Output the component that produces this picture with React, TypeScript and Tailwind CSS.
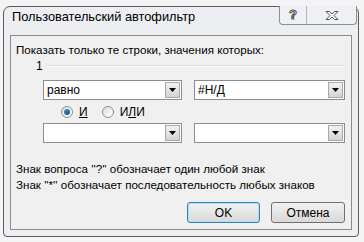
const FONT = "font-['Liberation_Sans','Noto_Sans',sans-serif]";

function Combo({ value, width }: { value: string; width: string }) {
  return (
    <div className={`${width} h-[20px] flex items-stretch border border-[#8a8d92] bg-white`}>
      <div className="flex-1 flex items-center pl-[3px] text-[12px] leading-[16px] text-black">{value}</div>
      <div className="w-[15px] m-[1px] ml-0 flex items-center justify-center border border-[#a9a9a9] bg-gradient-to-b from-[#f2f2f2] to-[#d4d4d4]">
        <svg width="7" height="4" viewBox="0 0 7 4">
          <path d="M0 0 H7 L3.5 4 Z" fill="#000" />
        </svg>
      </div>
    </div>
  );
}

function Radio({ checked, children }: { checked?: boolean; children: React.ReactNode }) {
  return (
    <div className="flex items-center gap-[6px]">
      <div className="w-[12px] h-[12px] rounded-full border border-[#8e8f8f] bg-gradient-to-br from-[#dcdcdc] to-[#ffffff] flex items-center justify-center">
        {checked && <div className="w-[6px] h-[6px] rounded-full bg-gradient-to-br from-[#3d9ad8] to-[#0d4d8a]" />}
      </div>
      <span className="text-[12px] leading-[16px] text-black">{children}</span>
    </div>
  );
}

export default function App() {
  return (
    <div className={`w-[364px] h-[242px] bg-[#f4f4f4] pt-[6px] pl-[3px] ${FONT}`}>
      <div className="relative w-[356px] h-[231px] rounded-t-[7px] rounded-b-[4px] border border-[#5b5b5b] bg-[#eceef1] flex flex-col">
        {/* caption buttons */}
        <div className="absolute top-[-1px] right-[1px] w-[78px] h-[19px] flex border border-t-0 border-[#8d8f93] rounded-b-[4px] bg-[#eef0f3]">
          <div className="w-[27px] flex items-center justify-center border-r border-[#b4b6ba]">
            <span className="text-[13px] font-bold text-[#f4f4f4] [-webkit-text-stroke:1px_#555]">?</span>
          </div>
          <div className="flex-1 flex items-center justify-center">
            <svg width="16" height="11" viewBox="0 0 16 11">
              <path d="M2 1.5 H5.5 L8 4 L10.5 1.5 H14 L10 5.5 L14 9.5 H10.5 L8 7 L5.5 9.5 H2 L6 5.5 Z" fill="#f4f4f4" stroke="#555" strokeWidth="1" />
            </svg>
          </div>
        </div>

        <div className="h-[28px] pl-[8px] pt-[2px] text-[12.8px] leading-[16px] text-black">Пользовательский автофильтр</div>

        <div className="mx-[6px] h-[195px] border border-[#8c8c8c] bg-[#f0f0f0] flex flex-col">
          <div className="mt-[6px] pl-[5px] text-[11.6px] leading-[16px] text-black">Показать только те строки, значения которых:</div>

          <div className="mt-[0px] h-[16px] flex items-center pl-[25px] pr-[6px]">
            <span className="text-[12px] leading-[16px] text-black">1</span>
            <div className="flex-1 ml-[4px] border-t border-[#d5dce2] border-b border-b-white" />
          </div>

          <div className="mt-[6px] pl-[32px] flex gap-[12px]">
            <Combo value="равно" width="w-[139px]" />
            <Combo value="#Н/Д" width="w-[151px]" />
          </div>

          <div className="mt-[3px] h-[18px] pl-[50px] flex items-center gap-[14px]">
            <Radio checked>
              <span className="underline">И</span>
            </Radio>
            <Radio>
              И<span className="underline">Л</span>И
            </Radio>
          </div>

          <div className="mt-[2px] pl-[32px] flex gap-[12px]">
            <Combo value="" width="w-[139px]" />
            <Combo value="" width="w-[151px]" />
          </div>

          <div className="mt-[18px] pl-[5px] text-[11.6px] leading-[16px] text-black">
            <div>Знак вопроса ''?'' обозначает один любой знак</div>
            <div>Знак ''*'' обозначает последовательность любых знаков</div>
          </div>

          <div className="mt-[9px] pr-[6px] flex justify-end gap-[11px]">
            <button className="w-[73px] h-[21px] rounded-[3px] border border-[#3c7fb1] bg-gradient-to-b from-[#f2f2f2] to-[#d9d9d9] text-[12px] leading-[16px] text-black shadow-[inset_0_0_0_1px_#aee0f7]">OK</button>
            <button className="w-[74px] h-[21px] rounded-[3px] border border-[#707070] bg-gradient-to-b from-[#f2f2f2] to-[#d9d9d9] text-[12px] leading-[16px] text-black">Отмена</button>
          </div>
        </div>
      </div>
    </div>
  );
}
